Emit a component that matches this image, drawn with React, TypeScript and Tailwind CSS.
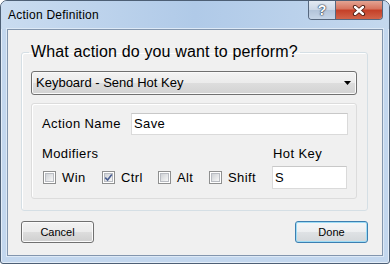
import React from "react";

function CheckBox({ checked }: { checked?: boolean }) {
  return (
    <span className="relative flex h-[13px] w-[13px] shrink-0 border border-[#8e8f8f] bg-white p-[1px]">
      <span className="flex-1 border border-[#b9bcc2] bg-gradient-to-br from-[#cfd2d6] to-[#f7f7f7]" />
      {checked && (
        <svg className="absolute left-[1px] top-[1px]" width="9" height="9" viewBox="0 0 9 9">
          <path d="M1.2 4.6 L3.6 7 L7.8 1.4" fill="none" stroke="#4a5e91" strokeWidth="1.6" />
        </svg>
      )}
    </span>
  );
}

function Modifier({ label, checked, width }: { label: string; checked?: boolean; width: string }) {
  return (
    <div className={`flex items-center gap-[6px] ${width}`}>
      <CheckBox checked={checked} />
      <span>{label}</span>
    </div>
  );
}

function WinButton({ label, isDefault }: { label: string; isDefault?: boolean }) {
  return (
    <button
      className={
        isDefault
          ? "flex h-[22px] w-[73px] items-center justify-center rounded-[3px] border border-[#3c7fb1] bg-[linear-gradient(#f4f6f8,#eceef0_50%,#dfe2e5_50%,#d3d7da)] text-[11px] shadow-[inset_0_0_0_1px_#9edcf5]"
          : "flex h-[22px] w-[73px] items-center justify-center rounded-[3px] border border-[#707070] bg-[linear-gradient(#f2f2f2,#ebebeb_50%,#dddddd_50%,#cfcfcf)] text-[11px] shadow-[inset_0_0_0_1px_#fbfbfb]"
      }
    >
      {label}
    </button>
  );
}

export default function App() {
  return (
    <div className="flex h-[264px] w-[390px] flex-col overflow-hidden rounded-t-[7px] rounded-b-[3px] border border-[#4d5f75] bg-[#c3d7ee] font-['Liberation_Sans',Arial,sans-serif] text-black shadow-[inset_0_0_0_1px_#e3edf8]">
      {/* title bar */}
      <div className="flex h-[28px] items-start bg-gradient-to-r from-[#cadcf0] via-[#b0cae8] to-[#c4d8ee]">
        <div className="pl-[7px] pt-[7px] text-[12px] leading-[15px] tracking-[0.25px] text-black">
          Action Definition
        </div>
        <div className="mr-[6px] ml-auto flex h-[19px] overflow-hidden rounded-b-[4px] border border-t-0 border-[#56677e]">
          <div className="flex w-[27px] items-center justify-center border-r border-[#56677e] bg-[linear-gradient(#e3eaf3,#cbd7e6_50%,#b2c3d9_50%,#c6d5e7)]">
            <span className="text-[14px] font-bold leading-none text-white [text-shadow:0_0_1px_#2a3a52,0_0_1px_#2a3a52,0_0_2px_#2a3a52]">
              ?
            </span>
          </div>
          <div className="flex w-[46px] items-center justify-center bg-[linear-gradient(#e3a493,#d6725c_45%,#c43f27_50%,#d1644a)]">
            <svg width="14" height="11" viewBox="0 0 14 11">
              <path d="M3 2 L11 9 M11 2 L3 9" stroke="#4a1a10" strokeWidth="4.2" strokeLinecap="round" />
              <path d="M3 2 L11 9 M11 2 L3 9" stroke="#ffffff" strokeWidth="2.4" strokeLinecap="round" />
            </svg>
          </div>
        </div>
      </div>

      {/* client area */}
      <div className="mx-[6px] mb-[7px] flex flex-1 flex-col border border-[#8396ae] bg-[#f0f0f0] shadow-[0_0_0_1px_#dde9f6]">
        <fieldset className="mt-[13px] ml-[13px] mr-[14px] rounded-[3px] border border-[#d5dfe5] pr-[10px] pb-[11px] pl-[9px] shadow-[inset_1px_1px_0_#ffffff]">
          <legend className="-ml-[2px] px-[2px] text-[16px] leading-[18px] tracking-[0.15px]">
            What action do you want to perform?
          </legend>

          <div className="mt-[10px] flex h-[24px] items-center rounded-[3px] border border-[#707070] bg-[linear-gradient(#f3f3f3,#ebebeb_50%,#dddddd_50%,#d2d2d2)] pr-[5px] pl-[4px] text-[13px] shadow-[inset_0_0_0_1px_#fafafa]">
            <span>Keyboard - Send Hot Key</span>
            <svg className="ml-auto" width="7" height="4" viewBox="0 0 7 4">
              <path d="M0 0 H7 L3.5 4 Z" fill="#000" />
            </svg>
          </div>

          <div className="mt-[8px] flex h-[96px] flex-col rounded-[3px] border border-[#dcdcdc] pt-[9px] pr-[8px] pl-[10px] text-[13px] tracking-[0.4px] shadow-[inset_1px_1px_0_#ffffff]">
            <div className="flex items-center">
              <span className="w-[89px]">Action Name</span>
              <div className="flex h-[22px] flex-1 items-center border border-[#dadada] border-t-[#c8c8c8] bg-white pl-[2px]">
                Save
              </div>
            </div>

            <div className="mt-[11px] flex">
              <div className="flex w-[230px] flex-col">
                <span className="leading-[15px]">Modifiers</span>
                <div className="mt-[5px] ml-[1px] flex h-[23px] items-center">
                  <Modifier label="Win" width="w-[59px]" />
                  <Modifier label="Ctrl" checked width="w-[56px]" />
                  <Modifier label="Alt" width="w-[51px]" />
                  <Modifier label="Shift" width="w-[56px]" />
                </div>
              </div>
              <div className="flex w-[75px] flex-col">
                <span className="pl-[1px] leading-[15px]">Hot Key</span>
                <div className="mt-[5px] flex h-[23px] items-center border border-[#dadada] border-t-[#c8c8c8] bg-white pl-[2px]">
                  S
                </div>
              </div>
            </div>
          </div>
        </fieldset>

        <div className="mt-[10px] ml-[13px] mr-[14px] flex justify-between">
          <WinButton label="Cancel" />
          <WinButton label="Done" isDefault />
        </div>
      </div>
    </div>
  );
}
